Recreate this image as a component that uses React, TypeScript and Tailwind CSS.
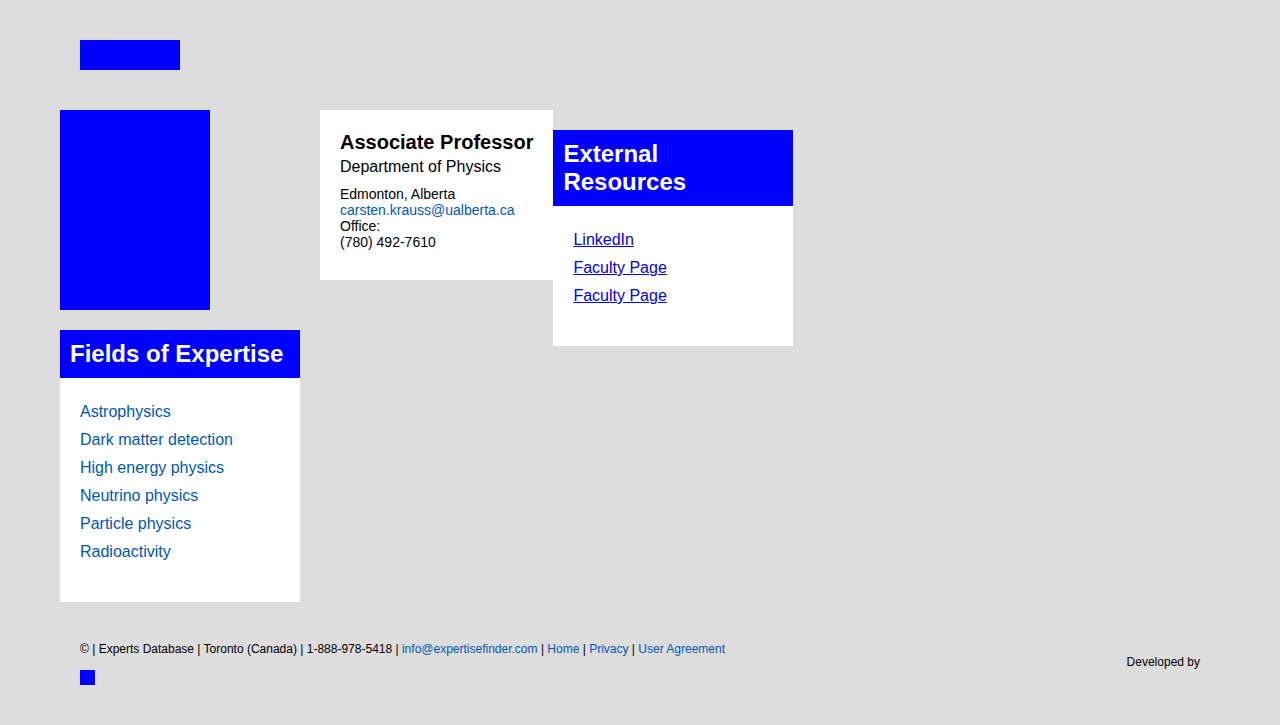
import React from 'react';

const fields = [
  'Astrophysics',
  'Dark matter detection',
  'High energy physics',
  'Neutrino physics',
  'Particle physics',
  'Radioactivity',
];

const resources = ['LinkedIn', 'Faculty Page', 'Faculty Page'];

export default function App() {
  return (
    <div
      className="min-h-screen bg-[#dddddd] px-[60px] text-black"
      style={{ fontFamily: '"Liberation Sans", Arial, sans-serif' }}
    >
      {/* header */}
      <header className="px-5 pt-10">
        <div className="h-[30px] w-[100px] bg-[#0000ff]" />
      </header>

      {/* main */}
      <main className="mt-10 flex items-start">
        <div className="w-[240px] shrink-0">
          <div className="h-[200px] w-[150px] bg-[#0000ff]" />
          <section className="mt-5 bg-white">
            <h2 className="bg-[#0000ff] px-[10px] py-[10px] text-[24px] font-bold leading-[28px] text-white">
              Fields of Expertise
            </h2>
            <ul className="px-5 pb-9 pt-5">
              {fields.map((f) => (
                <li key={f} className="text-[16px] leading-[28px] text-[#0057b8]">
                  {f}
                </li>
              ))}
            </ul>
          </section>
        </div>

        <section className="ml-5 w-fit bg-white p-5">
          <h1 className="text-[20px] font-bold leading-[24px]">Associate Professor</h1>
          <p className="mt-[4px] text-[16px] leading-[18px]">Department of Physics</p>
          <div className="mt-[10px] text-[14px] leading-[16px]">
            <div>Edmonton, Alberta</div>
            <a className="block text-[#0057b8]">carsten.krauss@ualberta.ca</a>
            <div>Office:</div>
            <div>(780) 492-7610</div>
          </div>
          <div className="h-[10px]" />
        </section>

        <section className="mt-5 w-[240px] shrink-0 bg-white">
          <h2 className="bg-[#0000ff] px-[10px] py-[10px] text-[24px] font-bold leading-[28px] text-white">
            External
            <br />
            Resources
          </h2>
          <ul className="px-5 pb-9 pt-5">
            {resources.map((r, i) => (
              <li key={i} className="text-[16px] leading-[28px]">
                <a className="cursor-pointer text-[#0000ee] underline">{r}</a>
              </li>
            ))}
          </ul>
        </section>
      </main>

      {/* footer */}
      <footer className="flex items-start justify-between px-5 pb-[39px] pt-[40px] text-[12px] leading-[14px]">
        <div>
          <p>
            © | Experts Database | Toronto (Canada) | 1-888-978-5418 |{' '}
            <a className="text-[#0057b8]">info@expertisefinder.com</a> |{' '}
            <a className="text-[#0057b8]">Home</a> | <a className="text-[#0057b8]">Privacy</a> |{' '}
            <a className="text-[#0057b8]">User Agreement</a>
          </p>
          <div className="mt-[14px] h-[15px] w-[15px] bg-[#0000ff]" />
        </div>
        <div className="pt-[13px]">Developed by</div>
      </footer>
    </div>
  );
}
